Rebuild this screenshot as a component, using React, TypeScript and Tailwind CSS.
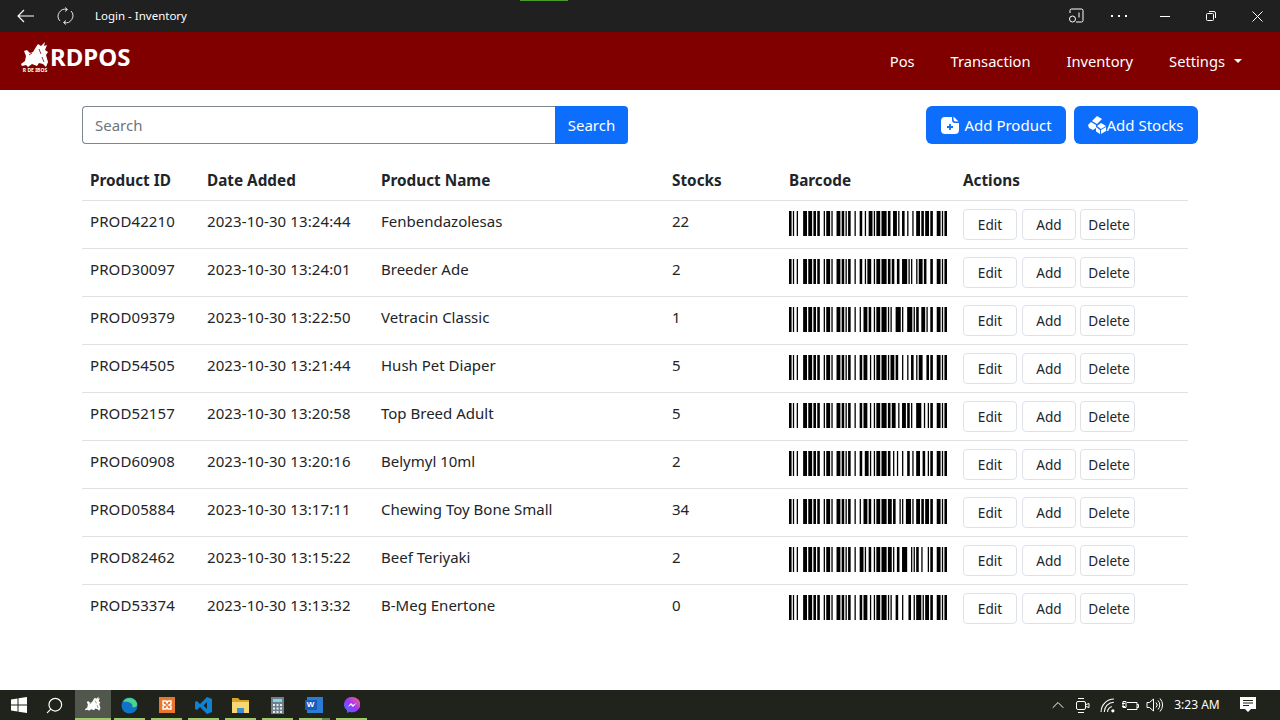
import type { ReactNode } from 'react';
import { Search, ChevronUp } from 'lucide-react';

// Code 128 bar widths, index = symbol value
const CODE128 = [
    '212222','222122','222221','121223','121322','131222','122213','122312','132212','221213','221312','231212','112232','122132','122231','113222','123122','123221','223211','221132','221231','213212','223112','312131','311222','321122','321221','312212','322112','322211','212123','212321','232121','111323','131123','131321','112313','132113','132311','211313','231113','231311','112133','112331','132131','113123','113321','133121','313121','211331','231131','213113','213311','213131','311123','311321','331121','312113','312311','332111','314111','221411','431111','111224','111422','121124','121421','141122','141221','112214','112412','122114','122411','142112','142211','241211','221114','413111','241112','134111','111242','121142','121241','114212','124112','124211','411212','421112','421211','212141','214121','412121','111143','111341','131141','114113','114311','411113','411311','113141','114131','311141','411131','211412','211214','211232','2331112',
];

// "PROD4" in set B, then switch to set C for the last two digit pairs
const encode = (value: string) => {
    const head = [...value.slice(0, 5)].map((c) => c.charCodeAt(0) - 32);
    const codes = [...head, 99, Number(value.slice(5, 7)), Number(value.slice(7, 9))];
    const check = codes.reduce((sum, c, i) => sum + c * (i + 1), 104) % 103;
    return [104, ...codes, check, 106];
};

const Barcode = ({ value }: { value: string }) => {
    const widths = encode(value).map((s) => CODE128[s]).join('').split('').map(Number);
    const total = widths.reduce((a, b) => a + b, 0);
    let x = 0;
    return (
        <svg width="158" height="25" viewBox={`0 0 ${total} 25`} preserveAspectRatio="none" className="block">
            {widths.map((w, i) => {
                const bar = i % 2 === 0 ? <rect key={i} x={x} y="0" width={w} height="25" fill="#000" /> : null;
                x += w;
                return bar;
            })}
        </svg>
    );
};

const products = [
    { id: 'PROD42210', date: '2023-10-30 13:24:44', name: 'Fenbendazolesas', stocks: 22 },
    { id: 'PROD30097', date: '2023-10-30 13:24:01', name: 'Breeder Ade', stocks: 2 },
    { id: 'PROD09379', date: '2023-10-30 13:22:50', name: 'Vetracin Classic', stocks: 1 },
    { id: 'PROD54505', date: '2023-10-30 13:21:44', name: 'Hush Pet Diaper', stocks: 5 },
    { id: 'PROD52157', date: '2023-10-30 13:20:58', name: 'Top Breed Adult', stocks: 5 },
    { id: 'PROD60908', date: '2023-10-30 13:20:16', name: 'Belymyl 10ml', stocks: 2 },
    { id: 'PROD05884', date: '2023-10-30 13:17:11', name: 'Chewing Toy Bone Small', stocks: 34 },
    { id: 'PROD82462', date: '2023-10-30 13:15:22', name: 'Beef Teriyaki', stocks: 2 },
    { id: 'PROD53374', date: '2023-10-30 13:13:32', name: 'B-Meg Enertone', stocks: 0 },
];

const LOGO_PATH = 'M0 22L4 19L5 14L3 9L6 8L9 11L12 10L15 5L17 2L20 4L24 0L23 4L26 3L24 8L27 10L25 13L27 20L25 25L22 22L18 21L16 24L11 22L7 25L5 23L1 24Z';

const LogoMark = ({ size }: { size: number }) => (
    <svg width={size} height={size} viewBox="0 0 28 26" fill="#fff">
        <path d={LOGO_PATH} />
        <path d="M8 13l3-2M18 7l2 5M21 15l2 5" stroke="#800000" strokeWidth="0.8" />
    </svg>
);

const AddProductIcon = () => (
    <svg width="20" height="19" viewBox="0 0 20 19" className="shrink-0">
        <path d="M5 1h7v3a3 3 0 0 0 3 3h4v7a4 4 0 0 1-4 4H5a4 4 0 0 1-4-4V5a4 4 0 0 1 4-4z" fill="#fff" />
        <path d="M13.500 0.500l5 5h-3a2 2 0 0 1-2-2z" fill="#fff" />
        <path d="M10 8v6M7 11h6" stroke="#0d6efd" strokeWidth="1.8" />
    </svg>
);

const AddStocksIcon = () => (
    <svg width="18" height="18" viewBox="0 0 18 18" className="shrink-0" fill="#fff">
        <path d="M4 5l5-5 5 3-5 5z" />
        <path d="M3 6l5 3v3l-3 2-4-2-1-3z" />
        <path d="M9 10l4-3 5 3-5 3z" />
        <path d="M8 11l4 3v4l-4-2.500zM13 14l5-3v4l-5 3z" />
    </svg>
);

const TitleBar = () => (
    <div className="relative h-8 bg-[#202020] flex items-center text-white shrink-0">
        <div className="absolute top-0 left-[520px] w-[48px] h-px bg-[#4c9a2a]" />
        <svg width="18" height="14" viewBox="0 0 18 14" fill="none" stroke="#fff" strokeWidth="1.1" className="ml-[17px]">
            <path d="M17 7H1M7 1L1 7l6 6" />
        </svg>
        <svg width="17" height="18" viewBox="0 0 17 18" fill="none" stroke="#e6e6e6" strokeWidth="1" className="ml-[22px]">
            <path d="M3 14a7 7 0 0 1 7-11.500M7 15.500A7 7 0 0 0 14 4" />
            <path d="M8 0.500l2.500 2-2.500 2M9 13.500l-2.500 2 2.500 2" />
        </svg>
        <span className="ml-[21px] text-[11.500px]">Login - Inventory</span>
        <div className="ml-auto flex items-center">
            <svg width="16" height="16" viewBox="0 0 16 16" fill="none" stroke="#fff" className="mr-[27px]">
                <path d="M2 5V2.500A1.500 1.500 0 0 1 3.500 1h10A1.500 1.500 0 0 1 15 2.500v10a1.500 1.500 0 0 1-1.500 1.500H8M11 4.500v5" />
                <circle cx="4.500" cy="11" r="3" />
            </svg>
            <div className="flex gap-[3px] mr-[33px]">
                <span className="w-[2px] h-[2px] bg-white" />
                <span className="w-[2px] h-[2px] bg-white ml-[2px]" />
                <span className="w-[2px] h-[2px] bg-white ml-[2px]" />
            </div>
            <span className="w-[10px] h-px bg-white mr-[36px]" />
            <svg width="10" height="10" viewBox="0 0 10 10" fill="none" stroke="#fff" className="mr-[36px]">
                <rect x="0.500" y="2.500" width="7" height="7" rx="1" />
                <path d="M3 0.500h5a1.500 1.500 0 0 1 1.500 1.500v5" />
            </svg>
            <svg width="11" height="11" viewBox="0 0 11 11" stroke="#fff" className="mr-[17px]">
                <path d="M0.500 0.500l10 10M10.500 0.500l-10 10" />
            </svg>
        </div>
    </div>
);

const NavBar = () => (
    <div className="h-[58px] bg-[#800000] flex items-start text-white shrink-0">
        <div className="ml-[21px] mt-[9px] flex items-start">
            <div className="flex flex-col items-center w-[28px]">
                <LogoMark size={28} />
                <span className="-mt-[1px] text-[5px] leading-[5px] font-bold whitespace-nowrap">R DE IBOS</span>
            </div>
            <span className="text-[24px] font-bold leading-8 ml-px">RDPOS</span>
        </div>
        <div className="ml-auto mr-[38px] mt-[17px] flex gap-9 leading-6 text-[14.700px]">
            <span>Pos</span>
            <span>Transaction</span>
            <span>Inventory</span>
            <span className="flex items-center">
                Settings
                <span className="ml-[9px] border-x-[4px] border-t-[4px] border-x-transparent border-t-white" />
            </span>
        </div>
    </div>
);

const TaskIcon = ({ children, split }: { children: ReactNode; split?: boolean }) => (
    <div className="w-[37px] flex items-center justify-center relative">
        {children}
        <span className="absolute bottom-0 left-[3px] right-[3px] h-[2px] bg-[#9ccc65]" />
        {split && <span className="absolute bottom-0 right-[3px] w-[8px] h-[2px] bg-[#6a8a48]" />}
    </div>
);

const Taskbar = () => (
    <div className="h-[30px] bg-[#1f231c] flex items-stretch text-white shrink-0">
        <div className="w-[37px] flex items-center justify-center">
            <svg width="16" height="16" viewBox="0 0 16 16" fill="#fff">
                <path d="M0 2.400L6.500 1.500V7.500H0zM7.500 1.300L16 0V7.500H7.500zM0 8.500H6.500V14.500L0 13.600zM7.500 8.500H16V16L7.500 14.700z" />
            </svg>
        </div>
        <div className="w-[38px] flex items-center justify-center">
            <Search size={19} strokeWidth={1.500} className="-scale-x-100 mr-[3px]" />
        </div>
        <div className="w-[36px] flex items-center justify-center bg-[#51574c] border-b-2 border-[#9ccc65]">
            <LogoMark size={16} />
        </div>
        <TaskIcon>
            <svg width="17" height="17" viewBox="0 0 17 17">
                <circle cx="8.500" cy="8.500" r="8" fill="#1173c7" />
                <path d="M2 5C4 0 13-1 16 6c1 3-2 5-5 4 2-3-3-6-9-5z" fill="#4fd38d" />
            </svg>
        </TaskIcon>
        <TaskIcon>
            <svg width="16" height="16" viewBox="0 0 16 16">
                <rect width="16" height="16" fill="#e8762c" />
                <path d="M4 4h3l1 2 1-2h3v3l-2 1 2 1v3H9L8 10l-1 2H4V9l2-1-2-1z" fill="none" stroke="#fff" strokeWidth="1.400" />
            </svg>
        </TaskIcon>
        <TaskIcon>
            <svg width="17" height="17" viewBox="0 0 17 17">
                <path d="M12 0l5 2v13l-5 2-7-7-3 3-2-1V5l2-1 3 3zM12 5L8.500 8.500 12 12z" fill="#0f83d1" />
            </svg>
        </TaskIcon>
        <TaskIcon>
            <svg width="17" height="15" viewBox="0 0 17 15">
                <path d="M0 0h6l2 2h9v3H0z" fill="#d9a520" />
                <path d="M0 4h17v11H0z" fill="#f7d774" />
                <path d="M5 15v-5h7v5z" fill="#3b8fd9" />
            </svg>
        </TaskIcon>
        <TaskIcon>
            <svg width="13" height="17" viewBox="0 0 13 17">
                <rect width="13" height="17" fill="#6f7f89" />
                <rect x="2" y="2" width="9" height="3" fill="#7fd7e8" />
                <path d="M2 7h2v2H2zM5.500 7h2v2h-2zM9 7h2v2H9zM2 10.500h2v2H2zM5.500 10.500h2v2h-2zM9 10.500h2v2H9zM2 14h2v2H2zM5.500 14h2v2h-2zM9 14h2v2H9z" fill="#e6edf1" />
            </svg>
        </TaskIcon>
        <TaskIcon split>
            <div className="relative w-4 h-4 bg-[#2b7cd3]">
                <span className="absolute -left-[2px] top-[3px] w-[12px] h-[10px] bg-[#185abd] text-white text-[8px] font-bold leading-[10px] text-center font-['Liberation_Sans',sans-serif]">W</span>
            </div>
        </TaskIcon>
        <TaskIcon>
            <svg width="16" height="16" viewBox="0 0 16 16">
                <defs>
                    <linearGradient id="msgr" x1="0" y1="1" x2="1" y2="0">
                        <stop offset="0" stopColor="#2f7bff" />
                        <stop offset="0.5" stopColor="#a033ff" />
                        <stop offset="1" stopColor="#ff6b6b" />
                    </linearGradient>
                </defs>
                <path d="M8 0a8 7.600 0 0 0-5 13.500V16l2.500-1.300A8 7.600 0 1 0 8 0z" fill="url(#msgr)" />
                <path d="M3.500 10L7 6l2 2 3.500-2-3.500 4-2-2z" fill="#fff" />
            </svg>
        </TaskIcon>
        <div className="ml-auto flex items-center">
            <ChevronUp size={20} strokeWidth={1.200} className="mr-[7px]" />
            <svg width="16" height="17" viewBox="0 0 16 17" fill="none" stroke="#fff" className="mr-[9px]">
                <rect x="1.500" y="4.500" width="9" height="8" rx="1.500" />
                <path d="M3 1.500h6M3 15.500h6M11 7.500l3-1v4l-3-1" />
            </svg>
            <svg width="15" height="15" viewBox="0 0 14 14" fill="none" stroke="#fff" className="mr-[7px]">
                <path d="M1 13a12 12 0 0 1 12-12M4 13a9 9 0 0 1 9-9M7 13a6 6 0 0 1 4-5" />
                <circle cx="12" cy="12" r="1.500" fill="#fff" stroke="none" />
            </svg>
            <svg width="17" height="13" viewBox="0 0 17 13" fill="none" stroke="#fff" className="mr-[7px]">
                <path d="M5 3.500h10v7H5M0 4.500h3M0 7.500h3M1 2.500h3v6H1zM15 5.500h1.500v3H15" />
            </svg>
            <svg width="17" height="16" viewBox="0 0 17 16" fill="none" stroke="#fff" className="mr-[11px]">
                <path d="M1 5.500h2.500L7.500 2v12l-4-3.500H1zM10 5.500a3.500 3.500 0 0 1 0 5M12 3.500a6.500 6.500 0 0 1 0 9M14 1.500a9.500 9.500 0 0 1 0 13" />
            </svg>
            <span className="text-xs w-[46px] whitespace-nowrap text-center mr-[20px]">3:23 AM</span>
            <svg width="16" height="16" viewBox="0 0 16 16" className="mr-[24px]">
                <path d="M0 0h16v12h-5l-3 3-3-3H0z" fill="#fff" />
                <path d="M3 3.500h10M3 6h10M3 8.500h6" stroke="#1f231c" />
            </svg>
        </div>
    </div>
);

const Header = ({ children }: { children: ReactNode }) => (
    <th className="px-2 pt-2 pb-2 text-left font-bold text-[15.300px] border-b border-[#dee2e6] align-bottom">{children}</th>
);

const ActionButton = ({ label, className }: { label: string; className: string }) => (
    <button className={`h-[31px] pt-px text-[13.600px] text-[#212529] bg-white border border-[#dee2e6] rounded ${className}`}>{label}</button>
);

export default function App() {
    return (
        <div className="h-[720px] w-[1280px] flex flex-col bg-white text-[#212529] font-['Noto_Sans',sans-serif] text-[15px] overflow-hidden">
            <TitleBar />
            <NavBar />
            <div className="flex-1 pt-4 pl-[82px] pr-[82px]">
                <div className="flex items-center h-[38px]">
                    <div className="flex w-[546px] h-full">
                        <input placeholder="Search" className="flex-1 min-w-0 px-3 border border-[#7f868d] border-r-0 rounded-l placeholder:text-[#6c757d] outline-none" />
                        <button className="w-[73px] bg-[#0d6efd] text-white rounded-r">Search</button>
                    </div>
                    <button className="ml-auto w-[140px] h-full flex items-center justify-center gap-[4px] bg-[#0d6efd] text-white rounded-md">
                        <AddProductIcon /> Add Product
                    </button>
                    <button className="ml-2 w-[124px] h-full flex items-center justify-center bg-[#0d6efd] text-white rounded-md">
                        <AddStocksIcon /> Add Stocks
                    </button>
                </div>
                <table className="mt-[17px] w-[1106px] table-fixed border-collapse">
                    <colgroup>
                        <col className="w-[117px]" />
                        <col className="w-[174px]" />
                        <col className="w-[291px]" />
                        <col className="w-[117px]" />
                        <col className="w-[174px]" />
                        <col />
                    </colgroup>
                    <thead>
                        <tr>
                            <Header>Product ID</Header>
                            <Header>Date Added</Header>
                            <Header>Product Name</Header>
                            <Header>Stocks</Header>
                            <Header>Barcode</Header>
                            <Header>Actions</Header>
                        </tr>
                    </thead>
                    <tbody>
                        {products.map((p, i) => (
                            <tr key={p.id} className={i < products.length - 1 ? 'border-b border-[#dee2e6]' : ''}>
                                <td className="px-2 py-2 align-top leading-6 tracking-[0.1px]">{p.id}</td>
                                <td className="px-2 py-2 align-top leading-6 tracking-[0.1px]">{p.date}</td>
                                <td className="px-2 py-2 align-top leading-6">{p.name}</td>
                                <td className="px-2 py-2 align-top leading-6">{p.stocks}</td>
                                <td className="px-2 pt-[10px] pb-[12px] align-top"><Barcode value={p.id} /></td>
                                <td className="px-2 py-2 align-top">
                                    <div className="flex">
                                        <ActionButton label="Edit" className="w-[54px]" />
                                        <ActionButton label="Add" className="w-[54px] ml-[5px]" />
                                        <ActionButton label="Delete" className="w-[55px] ml-[4px] pl-[3px]" />
                                    </div>
                                </td>
                            </tr>
                        ))}
                    </tbody>
                </table>
            </div>
            <Taskbar />
        </div>
    );
}
